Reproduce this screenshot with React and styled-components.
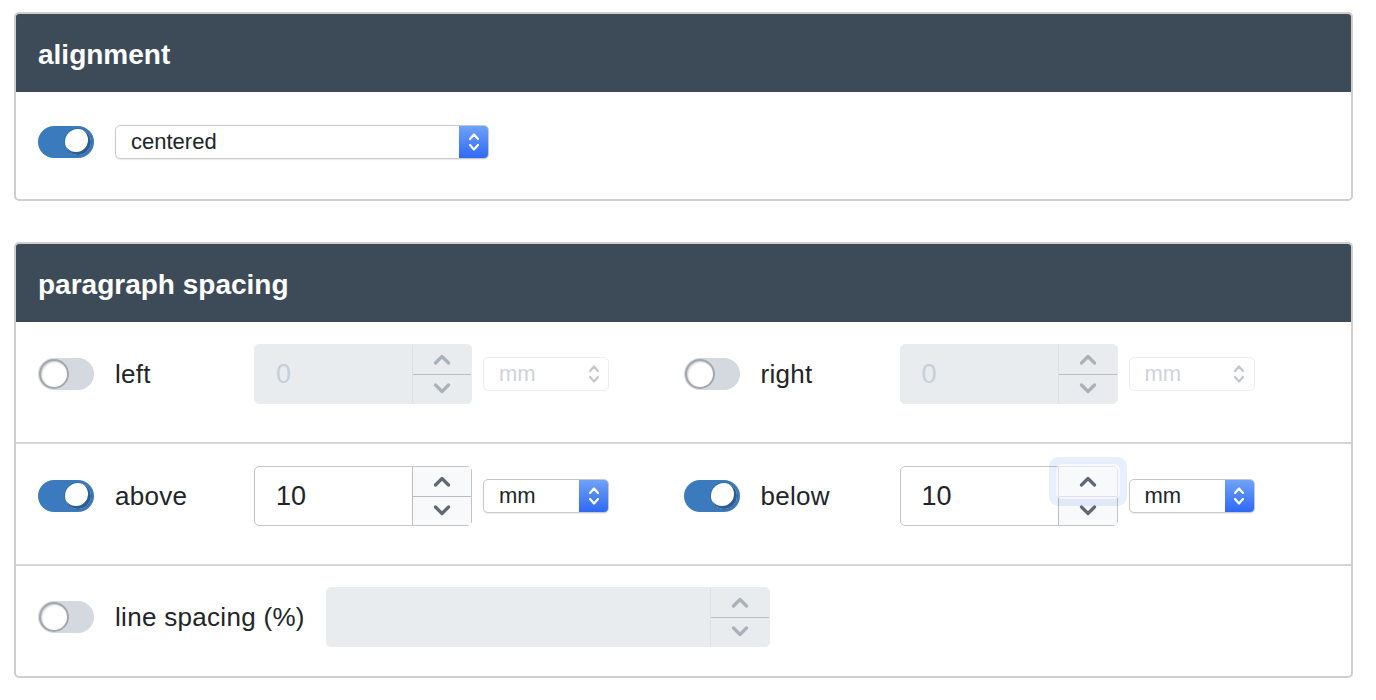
import React from 'react';
import styled, { createGlobalStyle } from 'styled-components';

const GlobalStyle = createGlobalStyle`
  body {
    margin: 0;
    background: #fff;
    font-family: 'Liberation Sans', Arial, sans-serif;
    color: #212529;
  }
`;

const Page = styled.div`
  display: flex;
  flex-direction: column;
  gap: 41px;
  padding: 12px 23px 20px 14px;
`;

// Card
const Card = styled.section`
  border: 2px solid #cfcfcf;
  border-radius: 5px;
  overflow: hidden;
`;

const CardHeader = styled.h2`
  margin: 0;
  height: 78px;
  box-sizing: border-box;
  display: flex;
  align-items: center;
  padding: 3px 22px 0;
  background: #3d4a58;
  color: #fff;
  font-size: 28px;
  font-weight: 700;
`;

const SimpleBody = styled.div`
  display: flex;
  align-items: center;
  gap: 21px;
  padding: 33px 22px 40px;
`;

const Row = styled.div`
  display: grid;
  grid-template-columns: 1fr 1fr;
  padding: ${p => (p.$last ? '21px 22px 29px' : '22px 22px 38px')};
  border-top: ${p => (p.$first ? 'none' : '2px solid #d6d6d6')};
`;

const Field = styled.div`
  display: flex;
  align-items: center;
`;

const Label = styled.span`
  min-width: 118px;
  margin: 0 21px;
  font-size: 26px;
  letter-spacing: 0.3px;
  white-space: nowrap;
`;

// Toggle switch
const Track = styled.span`
  position: relative;
  flex: none;
  width: 56px;
  height: 32px;
  border-radius: 16px;
  background: ${p => (p.$on ? '#3b7bbd' : '#d4d9e0')};
`;

const Knob = styled.span`
  position: absolute;
  top: ${p => (p.$on ? '3px' : '1px')};
  left: ${p => (p.$on ? '27px' : '1px')};
  width: ${p => (p.$on ? '26px' : '30px')};
  height: ${p => (p.$on ? '26px' : '30px')};
  box-sizing: border-box;
  border-radius: 50%;
  background: #fff;
  box-shadow: ${p =>
    p.$on
      ? 'inset -2px -2px 0 1px #2c5e93, 0 0 0 1px #346fac'
      : 'inset 0 0 0 2px #a3a7ad, inset 1px 1px 2px 2px #c9ccd1'};
`;

function Toggle({ on }) {
  return (
    <Track $on={on}>
      <Knob $on={on} />
    </Track>
  );
}

// Select
const SelectBox = styled.div`
  flex: none;
  display: flex;
  width: ${p => p.$width}px;
  height: 34px;
  box-sizing: border-box;
  border: 1px solid ${p => (p.$disabled ? '#eceef0' : '#c9c9c9')};
  border-radius: 5px;
  background: #fff;
  overflow: hidden;
  box-shadow: ${p => (p.$disabled ? 'none' : '0 1px 1px rgba(0,0,0,0.08)')};
`;

const SelectText = styled.span`
  flex: 1;
  display: flex;
  align-items: center;
  padding-left: ${p => p.$pad}px;
  font-size: 22px;
  color: ${p => (p.$disabled ? '#cfd3d8' : '#212529')};
`;

const SelectArrows = styled.span`
  flex: none;
  width: 29px;
  display: flex;
  align-items: center;
  justify-content: center;
  background: ${p =>
    p.$disabled ? 'transparent' : 'linear-gradient(#6fa2f7, #2e69f5)'};
`;

function Select({ value, width, pad = 15, disabled }) {
  const c = disabled ? '#c2c7cd' : '#fff';
  return (
    <SelectBox $width={width} $disabled={disabled}>
      <SelectText $pad={pad} $disabled={disabled}>{value}</SelectText>
      <SelectArrows $disabled={disabled}>
        <svg width="12" height="22" viewBox="0 0 12 22" fill="none" stroke={c} strokeWidth="2.2" strokeLinecap="round" strokeLinejoin="round">
          <polyline points="2,8 6,3.5 10,8" />
          <polyline points="2,14 6,18.5 10,14" />
        </svg>
      </SelectArrows>
    </SelectBox>
  );
}

// Number input with spinner
const NumberBox = styled.div`
  flex: none;
  position: relative;
  display: flex;
  width: ${p => p.$width}px;
  height: 60px;
  box-sizing: border-box;
  border: 1px solid ${p => (p.$disabled ? '#e9ecef' : '#c4c4c4')};
  border-radius: 5px;
  background: ${p => (p.$disabled ? '#e9ecef' : '#fff')};
  margin-right: 11px;
`;

const NumberValue = styled.span`
  flex: 1;
  display: flex;
  align-items: center;
  padding-left: 21px;
  font-size: 27px;
  color: ${p => (p.$disabled ? '#c5cfda' : '#212529')};
`;

const Spinner = styled.div`
  flex: none;
  width: 58px;
  display: flex;
  flex-direction: column;
  border-left: 1px solid ${p => (p.$disabled ? '#dde1e5' : '#bdbdbd')};
`;

const SpinButton = styled.span`
  flex: 1;
  display: flex;
  align-items: center;
  justify-content: center;
  background: ${p => (p.$disabled ? 'transparent' : '#f8f9fa')};
  & + & {
    border-top: 1px solid ${p => (p.$disabled ? '#dde1e5' : '#bdbdbd')};
  }
  ${p =>
    p.$focus &&
    `
    position: relative;
    z-index: 1;
    border-radius: 3px;
    box-shadow: 0 0 0 3px rgba(255,255,255,0.6), 0 0 0 10px rgba(70,130,240,0.13);
  `}
`;

function Chevron({ up, disabled }) {
  return (
    <svg width="20" height="12" viewBox="0 0 20 12" fill="none" stroke={disabled ? '#aab1b9' : '#5e6975'} strokeWidth="3.2" strokeLinecap="round" strokeLinejoin="round">
      <polyline points={up ? '3.5,10 10,3.5 16.5,10' : '3.5,2 10,8.5 16.5,2'} />
    </svg>
  );
}

function NumberInput({ value, width = 218, disabled, focusUp }) {
  return (
    <NumberBox $width={width} $disabled={disabled}>
      <NumberValue $disabled={disabled}>{value}</NumberValue>
      <Spinner $disabled={disabled}>
        <SpinButton $disabled={disabled} $focus={focusUp}>
          <Chevron up disabled={disabled} />
        </SpinButton>
        <SpinButton $disabled={disabled}>
          <Chevron disabled={disabled} />
        </SpinButton>
      </Spinner>
    </NumberBox>
  );
}

function SpacingField({ label, on, value, focusUp }) {
  return (
    <Field>
      <Toggle on={on} />
      <Label>{label}</Label>
      <NumberInput value={value} disabled={!on} focusUp={focusUp} />
      <Select value="mm" width={126} disabled={!on} />
    </Field>
  );
}

export default function App() {
  return (
    <>
      <GlobalStyle />
      <Page>
        <Card>
          <CardHeader>alignment</CardHeader>
          <SimpleBody>
            <Toggle on />
            <Select value="centered" width={374} />
          </SimpleBody>
        </Card>

        <Card>
          <CardHeader>paragraph spacing</CardHeader>
          <Row $first>
            <SpacingField label="left" value="0" />
            <SpacingField label="right" value="0" />
          </Row>
          <Row>
            <SpacingField label="above" value="10" on />
            <SpacingField label="below" value="10" on focusUp />
          </Row>
          <Row $last>
            <Field>
              <Toggle />
              <Label>line spacing (%)</Label>
              <NumberInput value="" width={444} disabled />
            </Field>
          </Row>
        </Card>
      </Page>
    </>
  );
}
